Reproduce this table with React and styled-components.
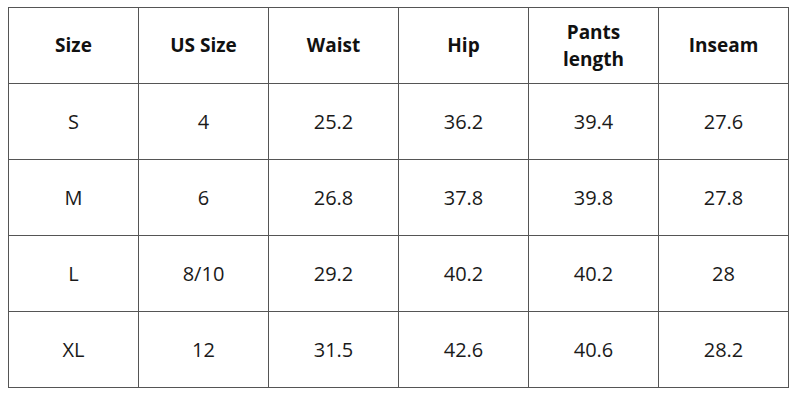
import React from 'react';
import styled, { createGlobalStyle } from 'styled-components';

const GlobalStyle = createGlobalStyle`
  body {
    margin: 0;
    background: #ffffff;
    font-family: 'Open Sans', 'Liberation Sans', sans-serif;
  }
`;

const Wrapper = styled.div`
  width: 800px;
  height: 400px;
  padding: 7px 0 0 8px;
  box-sizing: border-box;
`;

const Table = styled.table`
  border-collapse: collapse;
  table-layout: fixed;
  width: 780px;
  border: 1px solid #2a2a2a;
`;

const Col = styled.col`
  width: 130px;
`;

const HeadCell = styled.th`
  height: 75px;
  padding: 0;
  border: 1px solid #555555;
  text-align: center;
  vertical-align: middle;
  font-size: 19px;
  font-weight: 700;
  line-height: 27px;
  color: #111111;
`;

const Cell = styled.td`
  height: 75px;
  padding: 0;
  border: 1px solid #555555;
  text-align: center;
  vertical-align: middle;
  font-size: 20px;
  font-weight: 400;
  color: #1a1a1a;
`;

const headers = ['Size', 'US Size', 'Waist', 'Hip', 'Pants\nlength', 'Inseam'];

const rows = [
  ['S', '4', '25.2', '36.2', '39.4', '27.6'],
  ['M', '6', '26.8', '37.8', '39.8', '27.8'],
  ['L', '8/10', '29.2', '40.2', '40.2', '28'],
  ['XL', '12', '31.5', '42.6', '40.6', '28.2'],
];

function App() {
  return (
    <Wrapper>
      <GlobalStyle />
      <Table>
        <colgroup>
          {headers.map(h => (
            <Col key={h} />
          ))}
        </colgroup>
        <thead>
          <tr>
            {headers.map(h => (
              <HeadCell key={h}>
                {h.split('\n').map((line, i) => (
                  <div key={i}>{line}</div>
                ))}
              </HeadCell>
            ))}
          </tr>
        </thead>
        <tbody>
          {rows.map(row => (
            <tr key={row[0]}>
              {row.map((value, i) => (
                <Cell key={i}>{value}</Cell>
              ))}
            </tr>
          ))}
        </tbody>
      </Table>
    </Wrapper>
  );
}

export default App;
